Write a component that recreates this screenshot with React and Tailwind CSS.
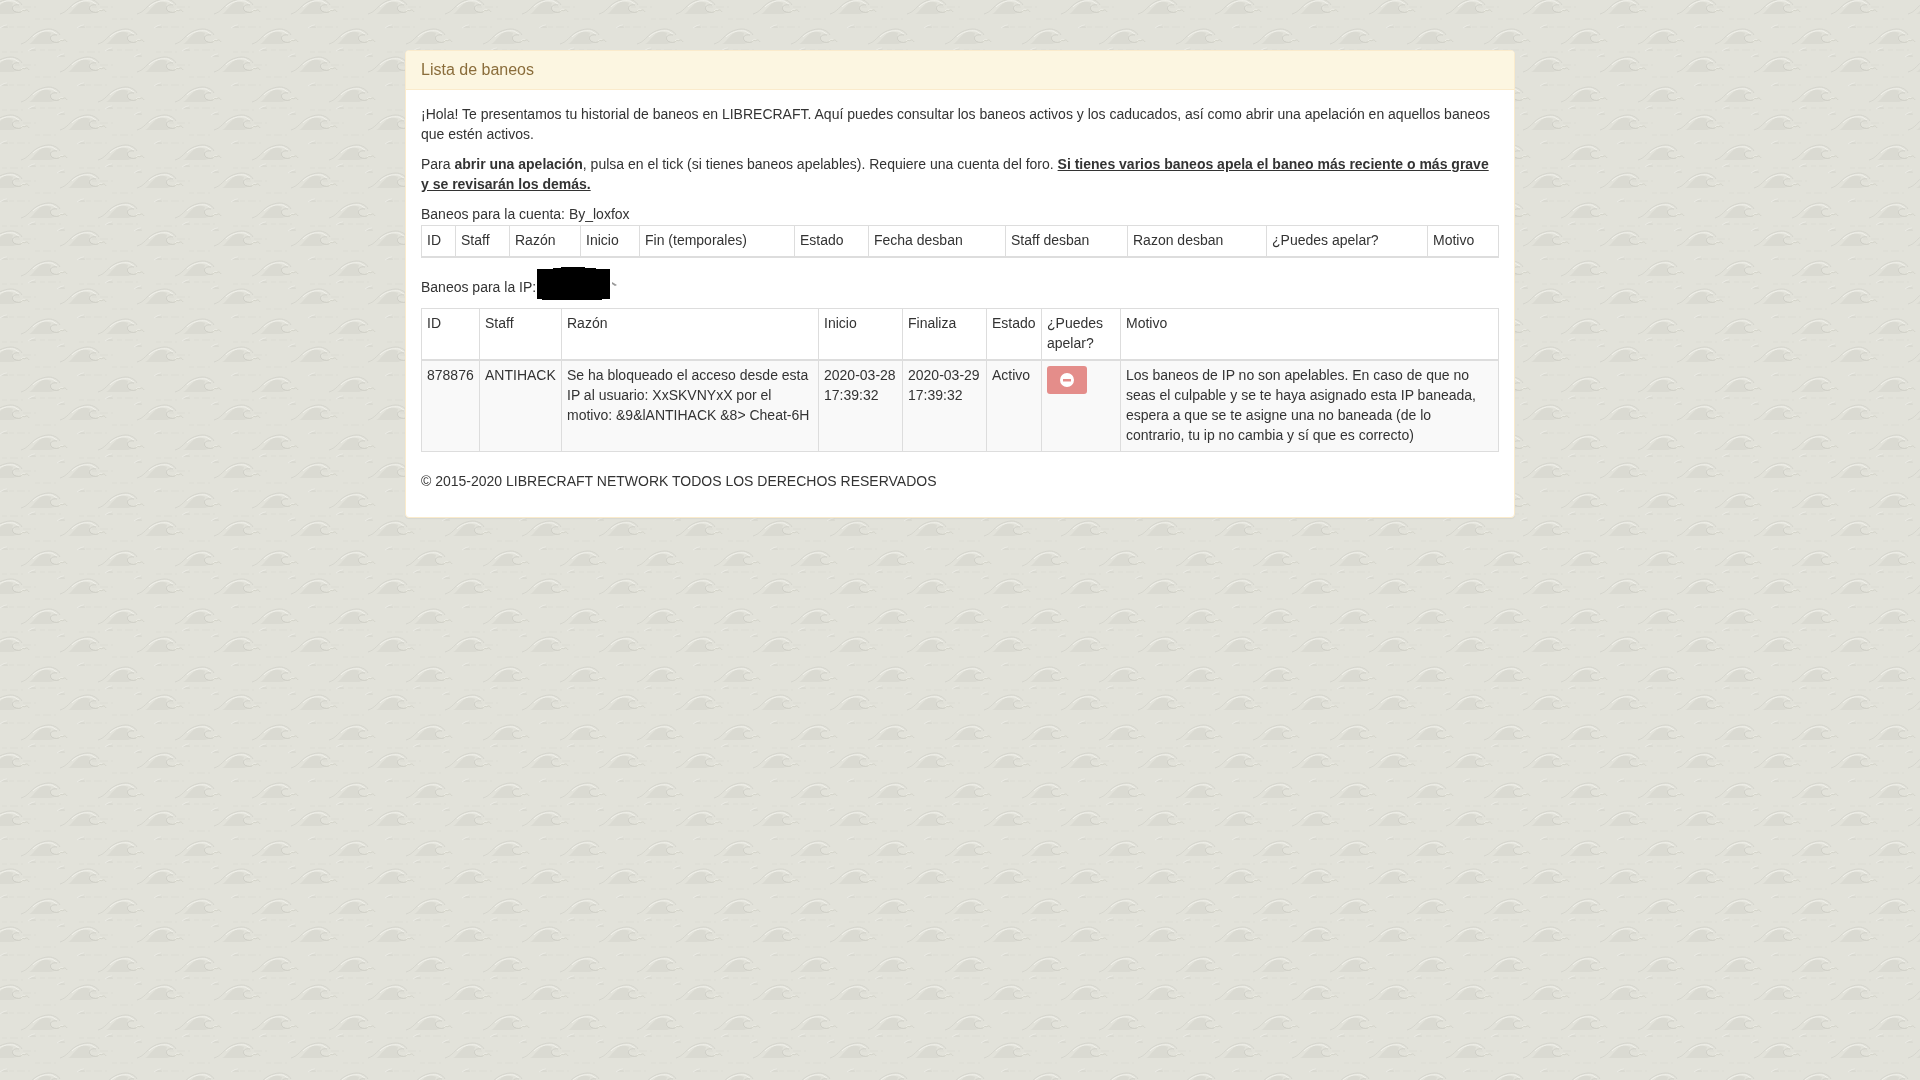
import React from 'react';

// column widths read off the reference
const accountCols = ['w-[34px]', 'w-[54px]', 'w-[71px]', 'w-[59px]', 'w-[155px]', 'w-[74px]', 'w-[137px]', 'w-[122px]', 'w-[139px]', 'w-[161px]', 'w-[71px]'];
const accountHead = ['ID', 'Staff', 'Razón', 'Inicio', 'Fin (temporales)', 'Estado', 'Fecha desban', 'Staff desban', 'Razon desban', '¿Puedes apelar?', 'Motivo'];

const ipCols = ['w-[58px]', 'w-[82px]', 'w-[257px]', 'w-[84px]', 'w-[84px]', 'w-[55px]', 'w-[79px]', 'w-[378px]'];
const ipHead = ['ID', 'Staff', 'Razón', 'Inicio', 'Finaliza', 'Estado', '¿Puedes apelar?', 'Motivo'];

const Wave = ({ x, y }) => (
  <g transform={`translate(${x} ${y})`}>
    <path d="M10 15C15 10 18 5 24 3L30 5L29 9C28 12 31 14 36 14L30 16L8 16Z" fill="#dadad2" />
    <path d="M0 16C7 14 10 8 15 5C21 1 29 0 33 2C36 3 38 5 39 7" fill="none" stroke="#cfcfc7" strokeWidth="0.7" />
    <path d="M12 9C17 4 24 2 31 3L36 6" fill="none" stroke="#f2f2ec" strokeWidth="0.9" />
    <path d="M36 7C31 6 28 9 30 12C31 14 35 15 38 14" fill="none" stroke="#c6c6bd" strokeWidth="0.7" />
    <path d="M38 14C39 12 41 12 42 13C43 11 45 12 46 14" fill="none" stroke="#cbcbc2" strokeWidth="0.7" />
    <path d="M38 13C40 11 41 11 42 12" fill="none" stroke="#f2f2ec" strokeWidth="0.6" />
  </g>
);

const Ripple = ({ x, y }) => (
  <g transform={`translate(${x} ${y})`}>
    <path d="M0 3L4 1L7 0L8 3Z" fill="#dadad2" />
    <path d="M0 3L4 0.5L7 0" fill="none" stroke="#f2f2ec" strokeWidth="0.6" />
  </g>
);

const Dashes = ({ x, y }) => (
  <path
    transform={`translate(${x} ${y})`}
    d="M0 0H5M8 0H16M19 0H21"
    stroke="#dadad2"
    strokeWidth="0.8"
    fill="none"
  />
);

// tiled wave paper behind the page
const WavePaper = () => (
  <svg className="fixed inset-0 -z-10 w-full h-full" aria-hidden="true">
    <defs>
      <pattern id="waves" width="77" height="58" patternUnits="userSpaceOnUse">
        <rect width="77" height="58" fill="#e2e2da" />
        <Wave x={21} y={28} />
        <Wave x={60} y={-2} />
        <Wave x={-17} y={-2} />
        <Wave x={60} y={56} />
        <Wave x={-17} y={56} />
        <Ripple x={0} y={25} />
        <Ripple x={77} y={25} />
        <Ripple x={28} y={48} />
        <Ripple x={57} y={54} />
        <Ripple x={57} y={-4} />
        <Dashes x={35} y={19} />
        <Dashes x={9} y={27} />
        <Dashes x={40} y={50} />
        <Dashes x={2} y={52} />
        <Dashes x={15} y={7} />
      </pattern>
    </defs>
    <rect width="100%" height="100%" fill="url(#waves)" />
  </svg>
);

const Redaction = () => (
  <svg className="absolute left-[1px] -top-[25px]" width="82" height="34" viewBox="0 0 82 34">
    <path d="M0 2H16V1H24V0H48V1H59V2H73V32H65V33H5V32H0Z" fill="#000" />
    <path d="M75 15L80 18L78 19L75 17Z" fill="#999" />
  </svg>
);

const MinusCircle = () => (
  <svg width="14" height="14" viewBox="0 0 14 14">
    <path fillRule="evenodd" d="M7 0a7 7 0 1 1 0 14A7 7 0 0 1 7 0ZM3 6v2.4h8V6Z" fill="#fff" />
  </svg>
);

const Th = ({ children }) => (
  <th className="border border-[#ddd] border-b-2 px-[5px] pt-[4px] pb-[6px] text-left align-top font-normal">{children}</th>
);

const Td = ({ children }) => (
  <td className="border border-[#ddd] px-[5px] pt-[4px] pb-[6px] align-top">{children}</td>
);

export default function App() {
  return (
    <div className="min-h-screen pt-[50px] text-[14px] leading-[20px] text-[#333] font-['Liberation_Sans',Arial,sans-serif]">
      <WavePaper />
      <div className="mx-auto w-[1110px] rounded-[4px] border border-[#faebcc] bg-white shadow-[0_1px_1px_rgba(0,0,0,0.05)]">
        <div className="h-[39px] border-b border-[#faebcc] bg-[#fcf6e1] px-[15px] pt-[10px] text-[16px] leading-[18px] text-[#8a6d3b] rounded-t-[3px]">
          Lista de baneos
        </div>
        <div className="px-[15px] pt-[14px] pb-[15px]">
          <p className="mb-[10px]">
            <span className="font-medium">¡Hola!</span> Te presentamos tu historial de baneos en LIBRECRAFT. Aquí puedes consultar los baneos activos y los caducados, así como abrir una apelación en aquellos baneos que estén activos.
          </p>
          <p className="mb-[10px]">
            Para <b>abrir una apelación</b>, pulsa en el tick (si tienes baneos apelables). Requiere una cuenta del foro. <b className="underline">Si tienes varios baneos apela el baneo más reciente o más grave y se revisarán los demás.</b>
          </p>

          Baneos para la cuenta: By_loxfox
          <table className="mt-[1px] mb-[19px] w-[1077px] table-fixed border-collapse">
            <colgroup>
              {accountCols.map((w, i) => <col key={i} className={w} />)}
            </colgroup>
            <thead>
              <tr>
                {accountHead.map((h) => <Th key={h}>{h}</Th>)}
              </tr>
            </thead>
          </table>

          <div className="mb-[11px]">
            Baneos para la IP:
            <span className="relative inline-block w-[80px]"><Redaction /></span>
          </div>
          <table className="mb-[19px] w-[1077px] table-fixed border-collapse">
            <colgroup>
              {ipCols.map((w, i) => <col key={i} className={w} />)}
            </colgroup>
            <thead>
              <tr>
                {ipHead.map((h) => <Th key={h}>{h}</Th>)}
              </tr>
            </thead>
            <tbody>
              <tr className="bg-[#f9f9f9]">
                <Td>878876</Td>
                <Td>ANTIHACK</Td>
                <Td>Se ha bloqueado el acceso desde esta IP al usuario: XxSKVNYxX por el motivo: &amp;9&amp;lANTIHACK &amp;8&gt; Cheat-6H</Td>
                <Td>2020-03-28 17:39:32</Td>
                <Td>2020-03-29 17:39:32</Td>
                <Td>Activo</Td>
                <Td>
                  <div className="mt-[1px] flex h-[28px] w-[40px] items-center justify-center rounded-[3px] bg-[#e48d8a]">
                    <MinusCircle />
                  </div>
                </Td>
                <Td><div className="max-w-[358px]">Los baneos de IP no son apelables. En caso de que no seas el culpable y se te haya asignado esta IP baneada, espera a que se te asigne una no baneada (de lo contrario, tu ip no cambia y sí que es correcto)</div></Td>
              </tr>
            </tbody>
          </table>

          <p className="mb-[11px]">© 2015-2020 LIBRECRAFT NETWORK TODOS LOS DERECHOS RESERVADOS</p>
        </div>
      </div>
    </div>
  );
}
